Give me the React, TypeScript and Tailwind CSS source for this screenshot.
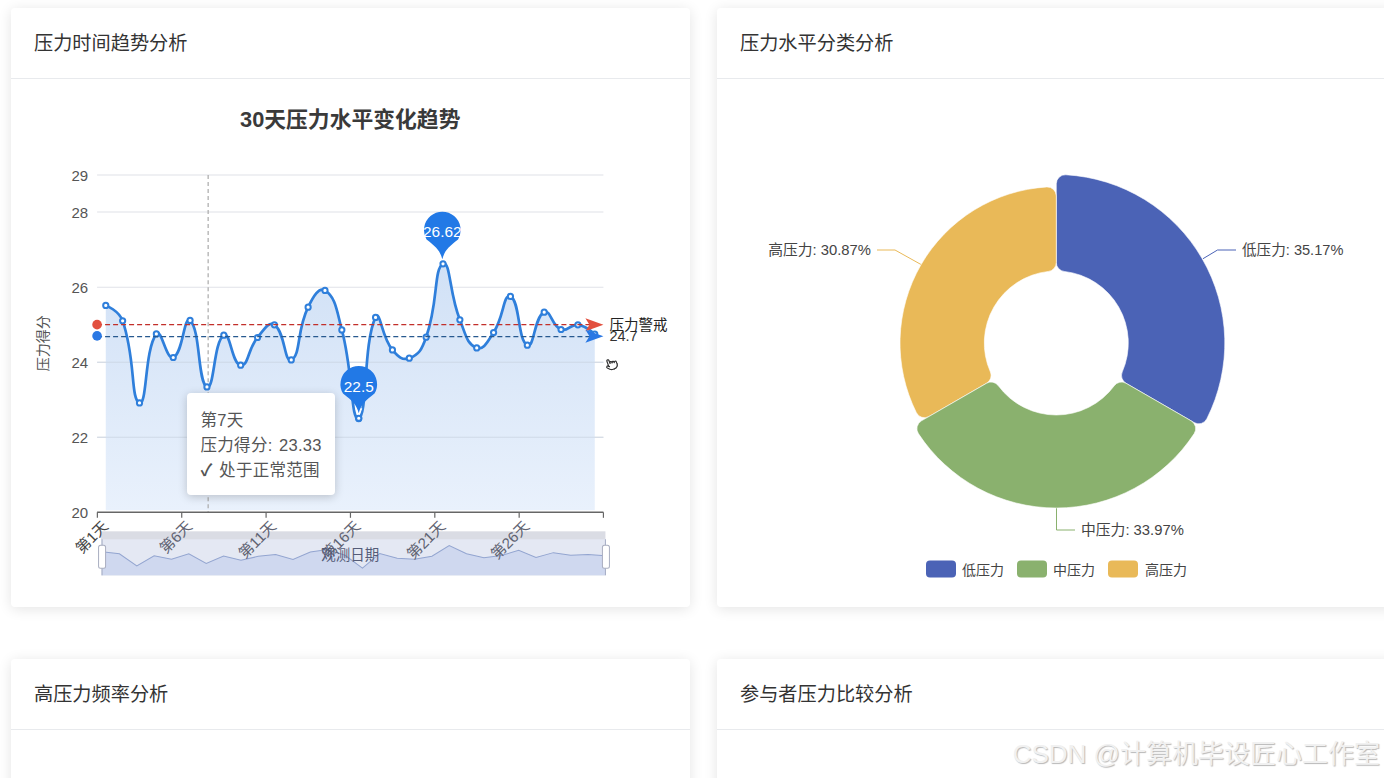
import React from "react";
import { Pointer } from "lucide-react";

const ys = [305.3,320.7,402.7,333.7,357.3,320.3,386.7,335,365,337.3,324.7,359.7,307,290.3,329.7,418.3,317.3,349.7,358,337,263.7,319.7,347.7,332.3,296.3,345,312,329.3,324.7,334];
const pts: [number, number][] = ys.map((y, i) => [105.7 + i * 16.85, y]);

function smooth(p: [number, number][], s = 0.5) {
  let d = `M${p[0][0]} ${p[0][1]}`;
  let c1: [number, number] = p[0];
  for (let i = 1; i < p.length; i++) {
    const cur = p[i];
    let c2: [number, number] = cur;
    let nextC1: [number, number] = cur;
    if (i < p.length - 1) {
      const prev = p[i - 1];
      const next = p[i + 1];
      const dx = next[0] - prev[0];
      const dy = next[1] - prev[1];
      const a = Math.hypot(cur[0] - prev[0], cur[1] - prev[1]);
      const b = Math.hypot(next[0] - cur[0], next[1] - cur[1]);
      const r = b / (a + b);
      c2 = [cur[0] - dx * s * (1 - r), cur[1] - dy * s * (1 - r)];
      nextC1 = [cur[0] + dx * s * r, cur[1] + dy * s * r];
    }
    d += ` C${c1[0].toFixed(2)} ${c1[1].toFixed(2)} ${c2[0].toFixed(2)} ${c2[1].toFixed(2)} ${cur[0].toFixed(2)} ${cur[1].toFixed(2)}`;
    c1 = nextC1;
  }
  return d;
}

const linePath = smooth(pts);
const areaPath = `${linePath} L594.35 510 L105.7 510 Z`;
const mini = ys.map((y, i) => `${(102 + (i * 503) / 29).toFixed(1)} ${(545.3 + (y - 264) * 0.1455).toFixed(1)}`);
const miniLine = "M" + mini.join(" L");
const miniArea = `${miniLine} L605 575 L102 575 Z`;

const polar = (cx: number, cy: number, r: number, deg: number) => {
  const t = (deg * Math.PI) / 180;
  return `${(cx + r * Math.sin(t)).toFixed(2)} ${(cy - r * Math.cos(t)).toFixed(2)}`;
};

function sector(R: number, a0: number, a1: number, r = 72, c = 9) {
  const cx = 1056.3;
  const cy = 343;
  const oOff = (Math.asin(c / (R - c)) * 180) / Math.PI;
  const iOff = (Math.asin(c / (r + c)) * 180) / Math.PI;
  const oRad = Math.sqrt((R - c) ** 2 - c * c);
  const iRad = Math.sqrt((r + c) ** 2 - c * c);
  const p = (rr: number, a: number) => polar(cx, cy, rr, a);
  return [
    `M${p(oRad, a0)}`,
    `A${c} ${c} 0 0 1 ${p(R, a0 + oOff)}`,
    `A${R} ${R} 0 0 1 ${p(R, a1 - oOff)}`,
    `A${c} ${c} 0 0 1 ${p(oRad, a1)}`,
    `L${p(iRad, a1)}`,
    `A${c} ${c} 0 0 1 ${p(r, a1 - iOff)}`,
    `A${r} ${r} 0 0 0 ${p(r, a0 + iOff)}`,
    `A${c} ${c} 0 0 1 ${p(iRad, a0)}`,
    "Z",
  ].join(" ");
}

function Pin({ x, tip, label, ty }: { x: number; tip: number; label: string; ty: number }) {
  const r = 18.3;
  const cy = tip - 29;
  return (
    <g>
      <path
        d={`M${x} ${tip} C${x - 2.5} ${tip - 9} ${x - 6} ${cy + 17} ${x - r * 0.86} ${cy + r * 0.51} A${r} ${r} 0 1 1 ${x + r * 0.86} ${cy + r * 0.51} C${x + 6} ${cy + 17} ${x + 2.5} ${tip - 9} ${x} ${tip} Z`}
        fill="#2279e6"
      />
      <text x={x} y={ty} textAnchor="middle" fontSize="15.4" fill="#fff">
        {label}
      </text>
    </g>
  );
}

function Arrow({ y, color }: { y: number; color: string }) {
  return <path d={`M603 ${y} L585 ${y - 6.5} L589 ${y} L585 ${y + 6.5} Z`} fill={color} />;
}

function TrendChart() {
  const yTicks: [string, number][] = [["29", 175], ["28", 212], ["26", 287], ["24", 362], ["22", 437], ["20", 512]];
  const xTicks = [97.3, 181.6, 265.9, 350.2, 434.5, 518.8, 603];
  const xLabels: [string, number][] = [["第1天", 106], ["第6天", 190], ["第11天", 274], ["第16天", 358], ["第21天", 443], ["第26天", 527]];
  return (
    <svg viewBox="11 79 679 528" className="block w-full h-full">
      <text x="350" y="127" textAnchor="middle" fontSize="21.8" fontWeight="700" fill="#3a3a3a">30天压力水平变化趋势</text>
      <defs>
        <linearGradient id="area" x1="0" y1="0" x2="0" y2="1">
          <stop offset="0" stopColor="#d1e1f6" />
          <stop offset="1" stopColor="#e9f1fc" />
        </linearGradient>
      </defs>
      {yTicks.slice(0, 5).map(([, y]) => (
        <line key={y} x1="97" x2="603" y1={y} y2={y} stroke="#e0e2e8" strokeWidth="1" />
      ))}
      {yTicks.map(([t, y]) => (
        <text key={t} x="88" y={y + 5.5} textAnchor="end" fontSize="15" fill="#555">{t}</text>
      ))}
      <text transform="translate(48 343) rotate(-90)" textAnchor="middle" fontSize="14" fill="#555">压力得分</text>
      <path d={areaPath} fill="url(#area)" />
      {yTicks.slice(3, 5).map(([, y]) => (
        <line key={y} x1="97" x2="603" y1={y} y2={y} stroke="#c9d1de" strokeOpacity="0.7" strokeWidth="1" />
      ))}
      <line x1="208" x2="208" y1="175" y2="512" stroke="#aaa" strokeWidth="1.2" strokeDasharray="4 3" />
      <line x1="97" x2="603" y1="512" y2="512" stroke="#666" strokeWidth="1.4" />
      {xTicks.map((x) => (
        <line key={x} x1={x} x2={x} y1="512" y2="517.5" stroke="#666" strokeWidth="1.2" />
      ))}
      <path d={linePath} fill="none" stroke="#2f7fdb" strokeWidth="2.7" />
      {pts.map(([x, y]) => (
        <circle key={x} cx={x} cy={y} r="2.6" fill="#fff" stroke="#2f7fdb" strokeWidth="2" />
      ))}
      <line x1="97" x2="590" y1="324.5" y2="324.5" stroke="#c22f2a" strokeWidth="1.3" strokeDasharray="5 3" />
      <line x1="97" x2="590" y1="336.5" y2="336.5" stroke="#27598f" strokeWidth="1.3" strokeDasharray="5 3" />
      <circle cx="97" cy="324.5" r="4.8" fill="#e2503f" />
      <circle cx="97" cy="335.7" r="4.8" fill="#2a78e4" />
      <Arrow y={324.5} color="#e2503f" />
      <Arrow y={336} color="#2a78e4" />
      <text x="609" y="341" fontSize="14.5" fill="#333">24.7</text>
      <text x="609" y="330" fontSize="14.5" fill="#222">压力警戒</text>
      <Pin x={442} tip={259} label="26.62" ty={236.5} />
      <Pin x={358.5} tip={413} label="22.5" ty={391.5} />
      <path d="M355.5 408 L358.5 416 L361.5 408" fill="none" stroke="#fff" strokeWidth="1" />
      <circle cx="358.5" cy="418" r="2.6" fill="#fff" stroke="#2f7fdb" strokeWidth="2" />
      <rect x="101" y="531" width="504" height="44" fill="#9ea3b8" fillOpacity="0.38" />
      <rect x="101" y="539" width="504" height="36" fill="#e8ecfa" fillOpacity="0.7" />
      <path d={miniArea} fill="#b9c8ec" fillOpacity="0.5" />
      <path d={miniLine} fill="none" stroke="#93a5d0" strokeWidth="1" />
      {xLabels.map(([t, x], i) => (
        <text key={t} transform={`translate(${x + 3} 527) rotate(-45)`} textAnchor="end" fontSize="15" fill={i === 0 ? "#444" : "#5f6372"}>{t}</text>
      ))}
      <text x="350" y="560" textAnchor="middle" fontSize="14.5" fill="#555c78">观测日期</text>
      <line x1="102" x2="102" y1="539" y2="575" stroke="#a5adc4" />
      <line x1="605" x2="605" y1="539" y2="575" stroke="#a5adc4" />
      <rect x="98.5" y="545" width="7" height="23" rx="2" fill="#fff" stroke="#a9aec0" />
      <rect x="602" y="545" width="7" height="23" rx="2" fill="#fff" stroke="#a9aec0" />
      <g transform="rotate(-20 611 364)">
        <Pointer x={604.5} y={357.5} width={13} height={13} stroke="#333" strokeWidth={2.2} fill="#fff" />
      </g>
    </svg>
  );
}

function DonutChart() {
  const blue = "#4b63b6";
  const green = "#8ab16e";
  const yellow = "#e9b958";
  const legend: [string, string, number, number][] = [
    [blue, "低压力", 926, 962],
    [green, "中压力", 1017, 1053],
    [yellow, "高压力", 1108, 1145],
  ];
  return (
    <svg viewBox="717 79 679 528" className="block w-full h-full">
      <path d="M1203 258.7 L1217.5 250 L1236 250" fill="none" stroke={blue} strokeWidth="1" />
      <path d="M921 264.5 L895 250 L877 250" fill="none" stroke={yellow} strokeWidth="1" />
      <path d="M1056.5 505 L1056.5 530 L1075 530" fill="none" stroke={green} strokeWidth="1" />
      <path d={sector(168.5, 0, 120)} fill={blue} stroke="#fff" strokeWidth="0.6" />
      <path d={sector(156.3, 240, 360)} fill={yellow} stroke="#fff" strokeWidth="0.6" />
      <path d={sector(165, 120, 240)} fill={green} stroke="#fff" strokeWidth="0.6" />
      <text x="1242" y="254.5" fontSize="14.6" fill="#444">低压力: 35.17%</text>
      <text x="871" y="254.5" textAnchor="end" fontSize="14.8" fill="#444">高压力: 30.87%</text>
      <text x="1081" y="534.5" fontSize="14.8" fill="#444">中压力: 33.97%</text>
      {legend.map(([c, t, rx, tx]) => (
        <g key={t}>
          <rect x={rx} y="560.5" width="30" height="17" rx="4" fill={c} />
          <text x={tx} y="574.5" fontSize="14" fill="#444">{t}</text>
        </g>
      ))}
    </svg>
  );
}

function Card({ title, children }: { title: string; children?: React.ReactNode }) {
  return (
    <section className="flex h-[599px] flex-col rounded bg-white shadow-[0_2px_14px_rgba(0,0,0,0.11)]">
      <header className="flex h-[71px] shrink-0 items-center border-b border-[#e8eaed] pl-[23.5px] pt-[2px] text-[19.2px] text-[#333]">{title}</header>
      <div className="relative flex-1">{children}</div>
    </section>
  );
}

export default function App() {
  return (
    <div className="relative h-[778px] w-[1384px] overflow-hidden bg-white [font-family:'Liberation_Sans','Noto_Sans_CJK_SC',sans-serif]">
      <div className="grid w-[1385px] grid-cols-[679.5px_679px] gap-x-[26.5px] gap-y-[52px] pl-[10.5px] pt-2">
        <Card title="压力时间趋势分析">
          <TrendChart />
          <div className="absolute left-[176.5px] top-[314px] flex h-[102px] w-[148px] flex-col justify-center gap-[5px] rounded-[4px] bg-white pl-[13.5px] pt-[1px] text-[16.5px] leading-5 tracking-[0.3px] text-[#555] [word-spacing:1.5px] shadow-[0_2px_10px_rgba(0,0,0,0.2)]">
            <div>第7天</div>
            <div>压力得分: 23.33</div>
            <div><span className="font-bold">✓</span> 处于正常范围</div>
          </div>
        </Card>
        <Card title="压力水平分类分析">
          <DonutChart />
        </Card>
        <Card title="高压力频率分析" />
        <Card title="参与者压力比较分析" />
      </div>
      <div className="absolute right-1 top-[740px] text-[26px] leading-7 text-[#f1f1f1] [text-shadow:1px_1px_1px_#b8b8b8]">CSDN @计算机毕设匠心工作室</div>
    </div>
  );
}
